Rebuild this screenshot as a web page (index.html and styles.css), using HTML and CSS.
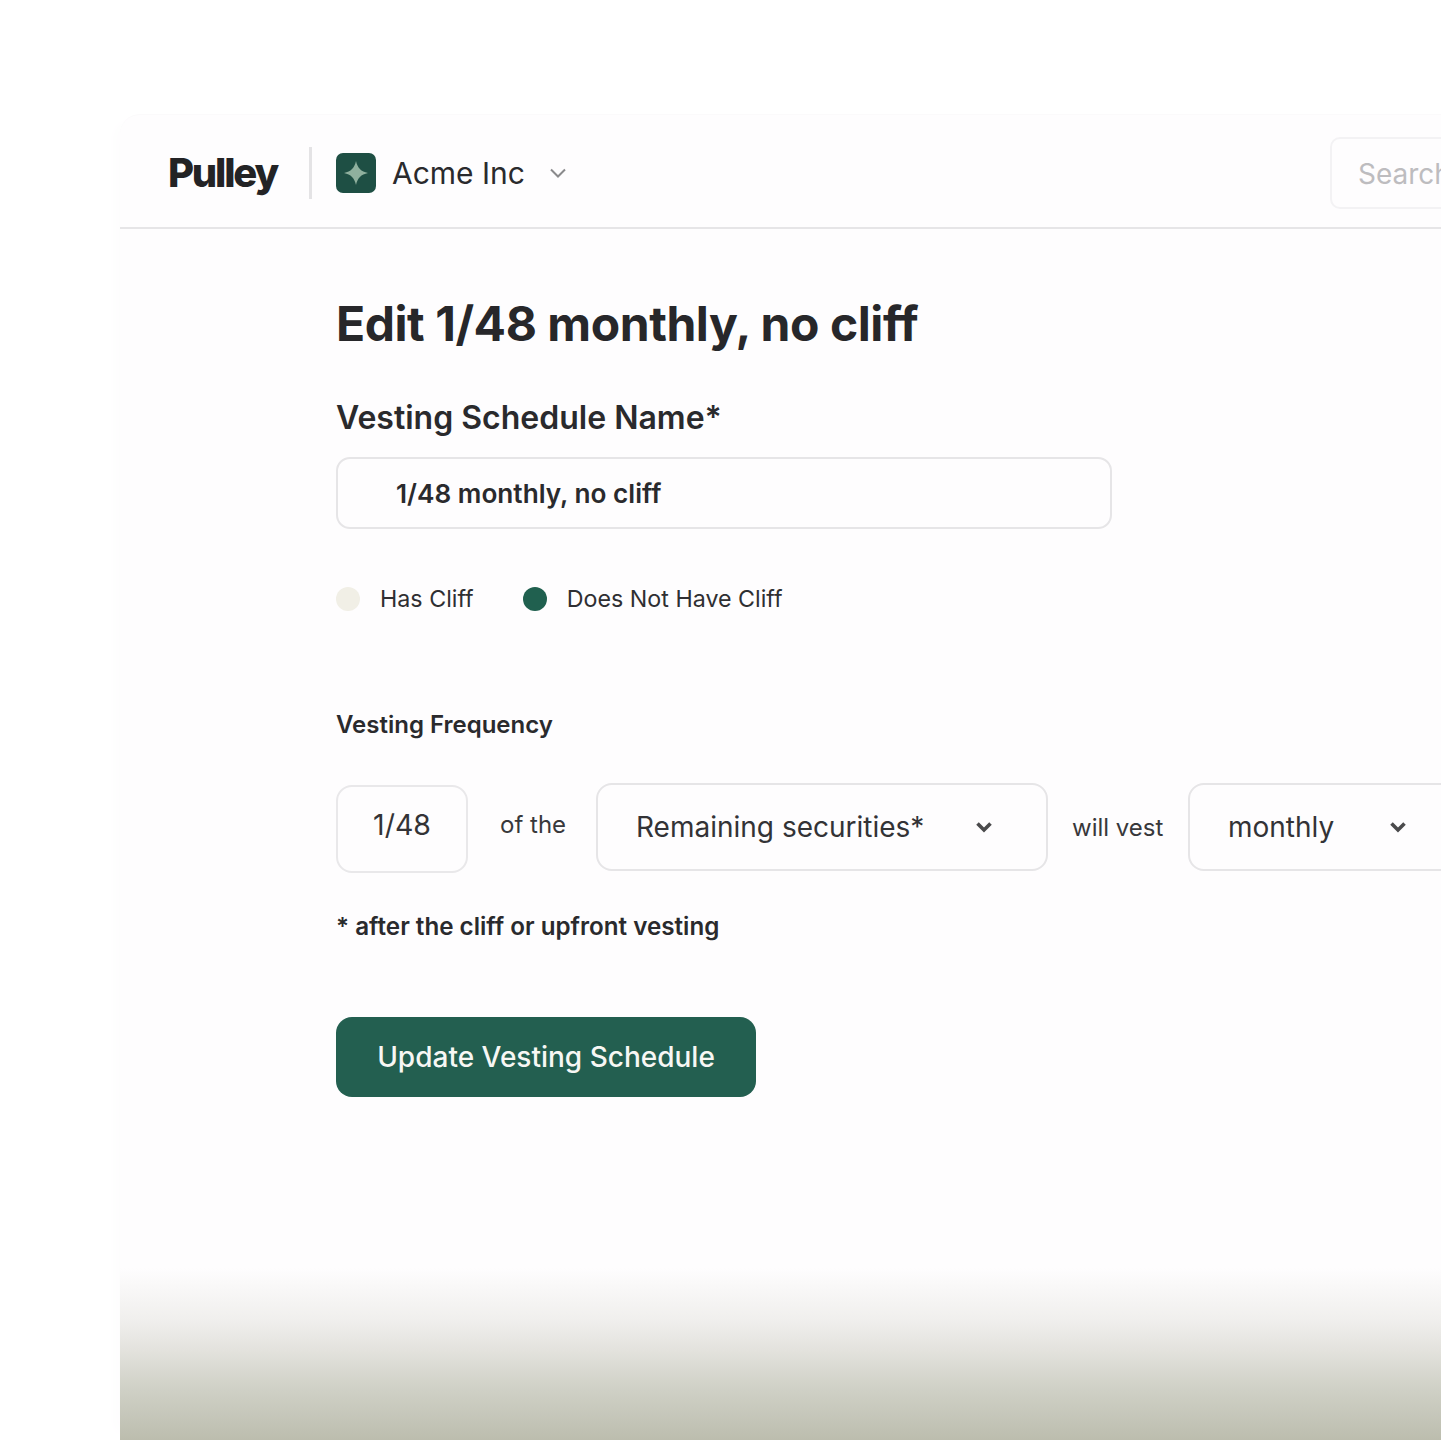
FILE: index.html
```html
<!DOCTYPE html>
<html lang="en">
<head>
<meta charset="utf-8">
<title>Edit vesting schedule</title>
<link rel="stylesheet" href="styles.css">
</head>
<body>
<div class="page">
  <div class="app">
    <header class="topbar">
      <div class="logo">Pulley</div>
      <div class="divider"></div>
      <div class="company-badge">
        <svg viewBox="0 0 40 40" width="40" height="40"><path d="M20 8 C21.500 15 25 18.500 32 20 C25 21.500 21.500 25 20 32 C18.500 25 15 21.500 8 20 C15 18.500 18.500 15 20 8 Z" fill="#8fb09e"/></svg>
      </div>
      <div class="company-name">Acme Inc</div>
      <svg class="company-caret" viewBox="0 0 18 12" width="18" height="12"><path d="M2 2.500 L9 9.500 L16 2.500" fill="none" stroke="#8a8a8c" stroke-width="2"/></svg>
      <div class="search">Search</div>
    </header>
    <main class="content">
      <h1 class="title">Edit 1/48 monthly, no cliff</h1>
      <h2 class="field-label">Vesting Schedule Name*</h2>
      <div class="name-input">1/48 monthly, no cliff</div>
      <div class="radios">
        <div class="radio"><span class="dot dot-off"></span>Has Cliff</div>
        <div class="radio"><span class="dot dot-on"></span>Does Not Have Cliff</div>
      </div>
      <h3 class="freq-label">Vesting Frequency</h3>
      <div class="freq-row">
        <div class="fraction">1/48</div>
        <div class="of-the">of the</div>
        <div class="select select-wide">
          <span>Remaining securities*</span>
          <svg viewBox="0 0 16 12" width="16" height="12"><path d="M1.500 2.500 L8 9 L14.500 2.500" fill="none" stroke="#4a4a4c" stroke-width="3.600"/></svg>
        </div>
        <div class="will-vest">will vest</div>
        <div class="select select-monthly">
          <span>monthly</span>
          <svg viewBox="0 0 16 12" width="16" height="12"><path d="M1.500 2.500 L8 9 L14.500 2.500" fill="none" stroke="#4a4a4c" stroke-width="3.600"/></svg>
        </div>
      </div>
      <p class="note">* after the cliff or upfront vesting</p>
      <button class="submit" type="button">Update Vesting Schedule</button>
    </main>
    <div class="fade"></div>
  </div>
</div>
</body>
</html>
```

FILE: styles.css
```css
* { box-sizing: border-box; }
html, body { margin: 0; padding: 0; background: #fff; }
body { font-family: Inter, "Liberation Sans", sans-serif; color: #27272a; }
.page { width: 1441px; height: 1441px; overflow: hidden; padding: 115px 0 0 120px; background: #fff; }
.app {
  position: relative;
  width: 1510px;
  height: 1325px;
  background: #fefdfe;
  border-top-left-radius: 20px;
  box-shadow: -12px 0 16px -8px #fdfcfd, 0 -1px 0 #fbfafb;
}
.topbar {
  display: flex;
  align-items: center;
  height: 114px;
  padding: 4px 0 0 48px;
  border-bottom: 2px solid #e6e5e7;
}
.logo { font-size: 40px; font-weight: 800; letter-spacing: -2.2px; line-height: 48px; color: #232325; width: 111px; flex: none; }
.divider { width: 3px; height: 52px; background: #e4e3e5; margin: 0 24px 0 30px; flex: none; }
.company-badge { width: 40px; height: 40px; border-radius: 7px; background: #1e4f44; flex: none; }
.company-badge svg { display: block; }
.company-name { font-size: 30px; line-height: 40px; margin-left: 16px; color: #2a2a2d; white-space: nowrap; flex: none; }
.company-caret { margin-left: 24px; flex: none; }
.search {
  margin-left: auto;
  width: 300px;
  height: 72px;
  border: 2px solid #f3f2f4;
  border-radius: 10px;
  padding-left: 26px;
  font-size: 28px;
  line-height: 70px;
  color: #bdbcbf;
  flex: none;
}
.content { padding: 0 0 0 216px; }
.title { margin: 65px 0 0; font-size: 48px; line-height: 60px; font-weight: 700; letter-spacing: -0.44px; color: #27272a; }
.field-label { margin: 42px 0 0; font-size: 32px; line-height: 44px; font-weight: 600; color: #2a2a2d; }
.name-input {
  width: 776px;
  height: 72px;
  margin-top: 17px;
  border: 2px solid #e6e5e7;
  border-radius: 14px;
  padding-left: 58px;
  font-size: 26.200px;
  font-weight: 600;
  line-height: 70px;
  color: #2a2a2d;
}
.radios { display: flex; gap: 49px; margin-top: 52px; }
.radio { display: flex; align-items: center; gap: 20px; font-size: 23.250px; line-height: 36px; color: #2f2f32; }
.dot { width: 24px; height: 24px; border-radius: 50%; flex: none; }
.dot-off { background: #f1efe6; }
.dot-on { background: #20604f; }
.freq-label { margin: 90px 0 0; font-size: 24px; line-height: 36px; font-weight: 600; color: #2a2a2d; }
.freq-row { display: flex; align-items: center; margin-top: 38px; width: 1200px; }
.fraction {
  width: 132px;
  height: 88px;
  margin-top: 4px;
  border: 2px solid #e9e8ea;
  border-radius: 16px;
  text-align: center;
  font-size: 28.500px;
  line-height: 76px;
  color: #333336;
}
.of-the { width: 128px; padding-left: 32px; font-size: 24px; line-height: 80px; color: #38383b; flex: none; margin-top: -4px; }
.select {
  display: flex;
  align-items: center;
  justify-content: space-between;
  height: 88px;
  border: 2px solid #e6e5e7;
  border-radius: 16px;
  font-size: 28px;
  color: #333336;
  flex: none;
}
.select-wide { width: 452px; padding: 0 54px 0 38px; }
.select-monthly { width: 300px; padding: 0 80px 0 38px; }
.will-vest { width: 140px; padding-left: 24px; font-size: 24px; color: #38383b; flex: none; }
.note { margin: 36px 0 0; font-size: 24.200px; line-height: 36px; font-weight: 600; color: #2a2a2d; }
.submit {
  display: block;
  width: 420px;
  height: 80px;
  margin-top: 72px;
  border: 0;
  border-radius: 16px;
  background: #235f50;
  color: #f7f7f4;
  font-family: inherit;
  font-size: 28px;
  font-weight: 500;
}
.fade {
  position: absolute;
  left: 0;
  right: 0;
  bottom: 0;
  height: 172px;
  background: linear-gradient(to bottom, rgba(254,253,254,0) 0%, #f0efed 30%, #e3e2dd 48%, #d1d2c8 68%, #c4c5b8 88%, #bcbdae 100%);
}
```
